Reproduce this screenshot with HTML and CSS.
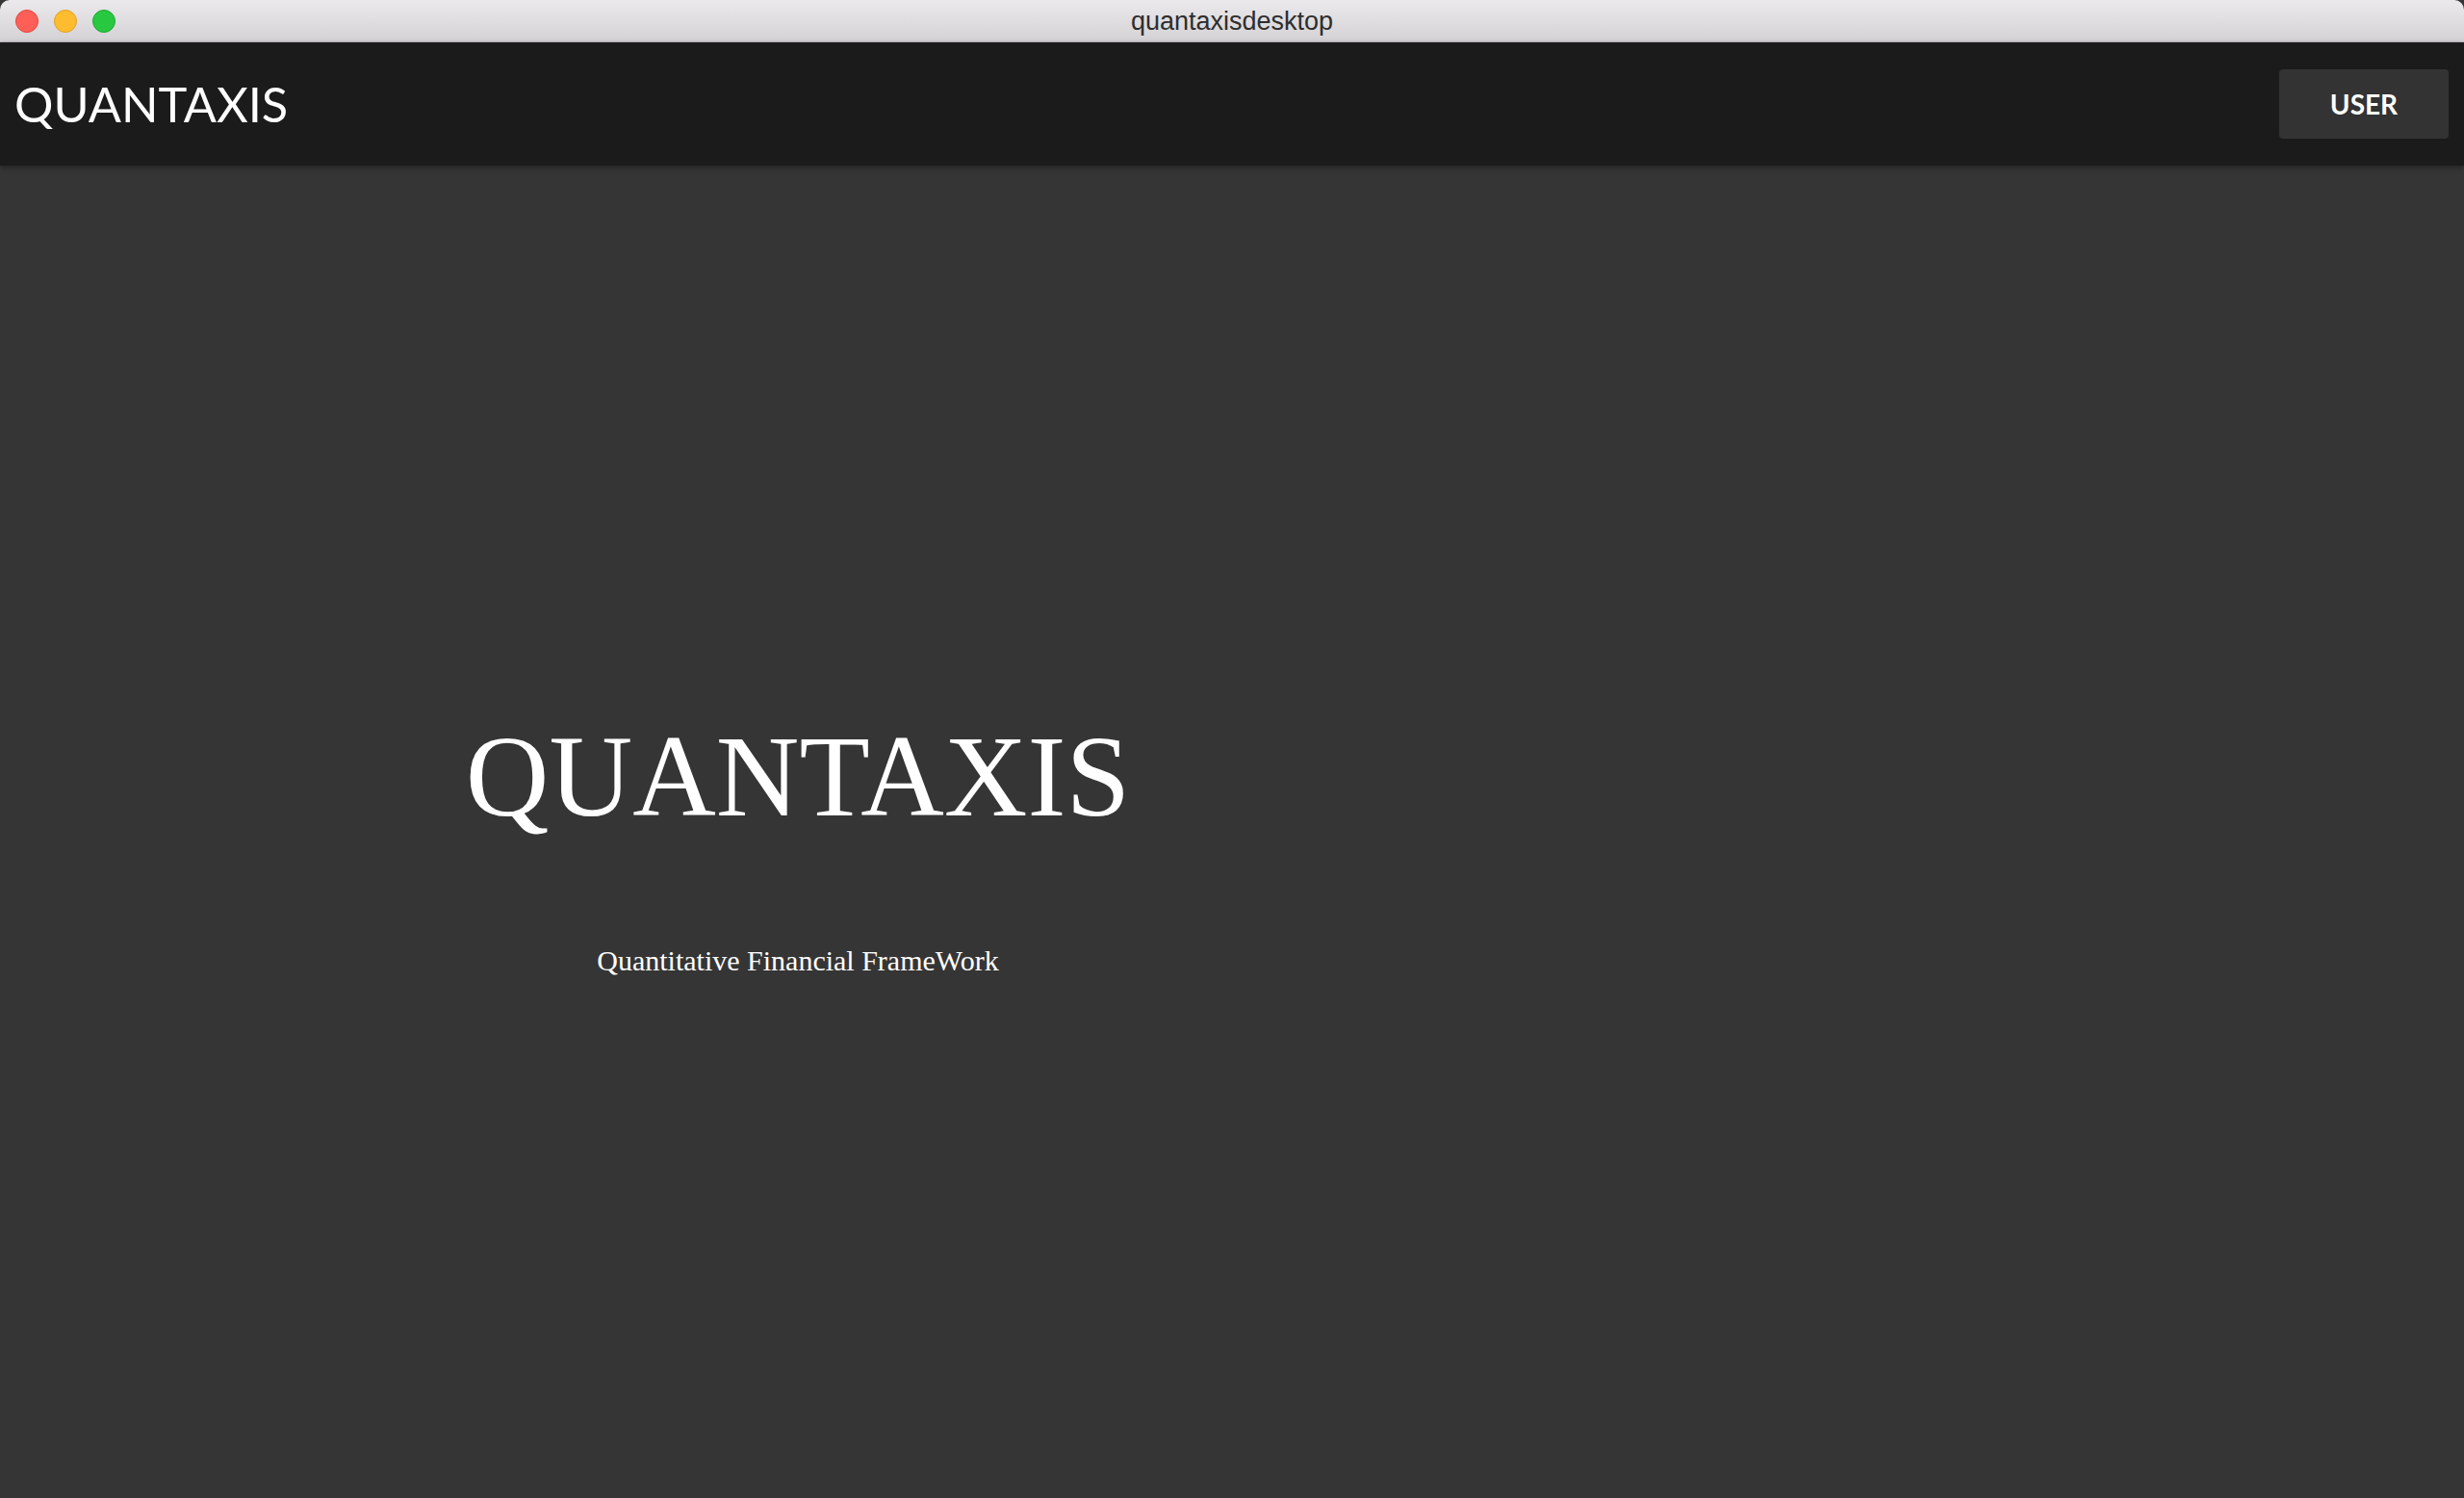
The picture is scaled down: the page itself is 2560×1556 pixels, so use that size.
FILE: index.html
```html
<!DOCTYPE html>
<html lang="en">
<head>
<meta charset="utf-8">
<title>quantaxisdesktop</title>
<link rel="stylesheet" href="styles.css">
</head>
<body>
<div class="window">
  <div class="titlebar">
    <div class="lights">
      <span class="light red"></span>
      <span class="light yellow"></span>
      <span class="light green"></span>
    </div>
    <div class="wintitle">quantaxisdesktop</div>
  </div>
  <header class="appbar">
    <div class="brand">QUANTAXIS</div>
    <button class="user-btn">USER</button>
  </header>
  <main class="main">
    <section class="hero">
      <h1 class="hero-title">QUANTAXIS</h1>
      <p class="hero-sub">Quantitative Financial FrameWork</p>
    </section>
  </main>
</div>
</body>
</html>
```
FILE: styles.css
```css
html, body {
  margin: 0;
  padding: 0;
  height: 100%;
  background: #353535;
}
.window {
  display: flex;
  flex-direction: column;
  height: 1556px;
  overflow: hidden;
}
.titlebar {
  height: 43px;
  border-bottom: 1px solid #bfbdbf;
  background: linear-gradient(#ebe9eb, #d4d2d4);
  border-radius: 10px 10px 0 0;
  display: flex;
  align-items: center;
  position: relative;
}
.lights {
  display: flex;
  gap: 16px;
  padding-left: 16px;
  margin-top: 1px;
}
.light {
  width: 22px;
  height: 22px;
  border-radius: 50%;
  border: 1px solid transparent;
}
.red { background: #fe5f57; border-color: #e2463f; }
.yellow { background: #febc2e; border-color: #e0a229; }
.green { background: #28c840; border-color: #1fa934; }
.wintitle {
  position: absolute;
  left: 0;
  right: 0;
  top: 1px;
  text-align: center;
  line-height: 43px;
  font-family: "Liberation Sans", Arial, sans-serif;
  font-size: 27px;
  color: #2e2e2e;
}
.appbar {
  height: 128px;
  background: #1b1b1b;
  display: flex;
  align-items: center;
  justify-content: space-between;
  padding: 0 16px 0 15px;
  box-shadow: 0 2px 6px rgba(0,0,0,0.35);
  position: relative;
  z-index: 1;
}
.brand {
  font-family: Lato, sans-serif;
  font-size: 50.5px;
  color: #ffffff;
  line-height: 1.2;
}
.user-btn {
  width: 176px;
  height: 72px;
  background: #333333;
  color: #ffffff;
  border: none;
  border-radius: 4px;
  font-family: Lato, sans-serif;
  font-weight: 700;
  font-size: 28px;
  padding: 0;
}
.main {
  flex: 1;
  background: #353535;
  padding-top: 575px;
}
.hero {
  width: 1658px;
  text-align: center;
  color: #ffffff;
  font-family: "Liberation Serif", "Times New Roman", serif;
}
.hero-title {
  margin: 0;
  font-weight: 400;
  font-size: 120px;
  line-height: 120px;
}
.hero-sub {
  margin: 116px 0 0;
  font-size: 30px;
  line-height: 30px;
}
```
